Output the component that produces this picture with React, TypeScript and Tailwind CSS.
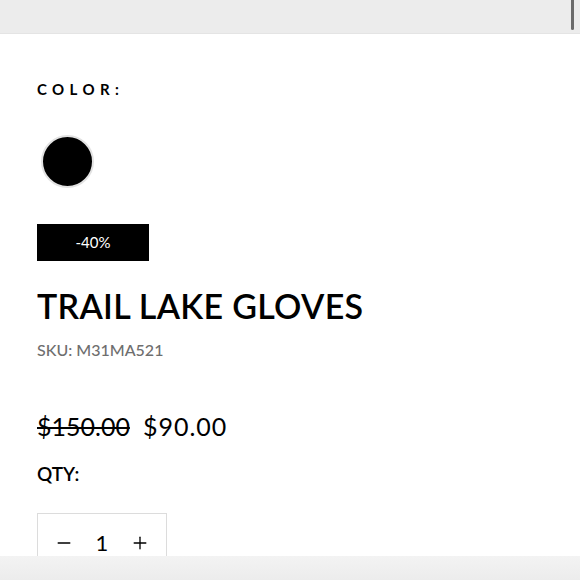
import { Minus, Plus } from 'lucide-react';

function QtyStepper() {
  return (
    <div className="flex h-[60px] w-[130px] items-center justify-between border border-[#dcdcdc] px-[16px]">
      <Minus className="h-[20px] w-[20px]" strokeWidth={1.6} />
      <span className="text-[22px] leading-none">1</span>
      <Plus className="h-[20px] w-[20px]" strokeWidth={1.6} />
    </div>
  );
}

export default function App() {
  return (
    <div
      className="relative flex h-[580px] w-[580px] flex-col overflow-hidden bg-white text-black"
      style={{ fontFamily: 'Lato, "Noto Sans", sans-serif' }}
    >
      <div className="relative h-[34px] shrink-0 border-b border-[#e4e4e4] bg-[#ececec]">
        <div className="absolute right-[6px] top-0 h-[30px] w-[3px] rounded-b bg-[#6b6b6b]" />
      </div>

      <div className="flex flex-col px-[37px]">
        <div className="mt-[47px] text-[15px] font-bold leading-[16px] tracking-[0.36em]">COLOR:</div>

        <div className="ml-[4px] mt-[38px] h-[53px] w-[53px] rounded-full border-2 border-[#e2e2e2] bg-black" />

        <div className="mt-[36px] flex h-[37px] w-[112px] items-center justify-center bg-black text-[15px] text-white">
          -40%
        </div>

        <h1 className="mt-[25px] text-[34px] font-semibold leading-[40px] tracking-[0.3px]">TRAIL LAKE GLOVES</h1>

        <div className="mt-[14px] text-[16px] font-medium leading-[20px] text-[#6e6e6e]">SKU: M31MA521</div>

        <div className="mt-[51px] flex items-center gap-[13px] text-[25px] leading-[30px]">
          <span className="line-through decoration-[1.5px]">$150.00</span>
          <span className="tracking-[1px]">$90.00</span>
        </div>

        <div className="mt-[22px] text-[19px] font-semibold leading-[22px]">QTY:</div>

        <div className="mt-[28px]">
          <QtyStepper />
        </div>
      </div>

      <div className="absolute bottom-0 left-0 h-[24px] w-full bg-gradient-to-b from-[#f3f3f3] to-[#ececec]" />
    </div>
  );
}
